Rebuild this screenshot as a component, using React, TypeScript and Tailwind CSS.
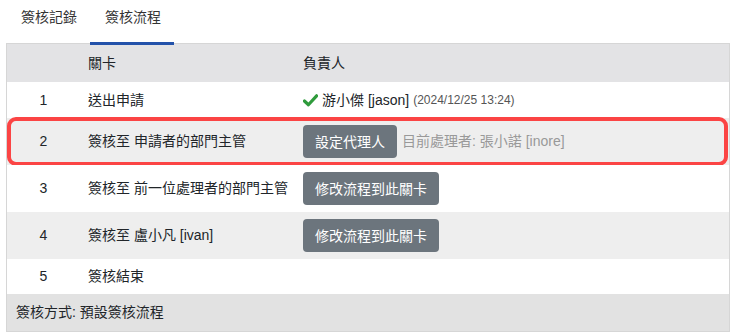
import React from "react";

const font = { fontFamily: '"Liberation Sans", "Noto Sans CJK TC", sans-serif' };

type Row = {
  no: number;
  step: string;
  shade?: boolean;
  h: string;
  owner?: React.ReactNode;
};

function CheckMark() {
  return (
    <svg viewBox="0 0 16 16" className="w-[15px] h-[15px] mr-[4px]">
      <path d="M1.5 8.5 L5.8 12.5 L14.5 3" fill="none" stroke="#2f9b3c" strokeWidth="3.4" strokeLinecap="round" strokeLinejoin="round" />
    </svg>
  );
}

function GrayButton({ label }: { label: string }) {
  return (
    <button className="h-[33px] px-[12px] rounded-[4px] bg-[#6c757d] text-white text-[14px] leading-none">
      {label}
    </button>
  );
}

export default function App() {
  const rows: Row[] = [
    {
      no: 1,
      step: "送出申請",
      h: "h-[36px]",
      owner: (
        <div className="flex items-center">
          <CheckMark />
          <span className="text-[14px] text-[#212529]">游小傑 [jason]</span>
          <span className="ml-[4px] text-[12px] text-[#555]">(2024/12/25 13:24)</span>
        </div>
      ),
    },
    {
      no: 2,
      step: "簽核至 申請者的部門主管",
      shade: true,
      h: "h-[47px]",
      owner: (
        <div className="flex items-center">
          <GrayButton label="設定代理人" />
          <span className="ml-[5px] text-[14px] text-[#999]">目前處理者: 張小諾 [inore]</span>
        </div>
      ),
    },
    { no: 3, step: "簽核至 前一位處理者的部門主管", h: "h-[47px]", owner: <GrayButton label="修改流程到此關卡" /> },
    { no: 4, step: "簽核至 盧小凡 [ivan]", shade: true, h: "h-[47px]", owner: <GrayButton label="修改流程到此關卡" /> },
    { no: 5, step: "簽核結束", h: "h-[35px]" },
  ];

  return (
    <div className="w-[735px] h-[336px] bg-white px-[6px] text-[#212529]" style={font}>
      {/* Tabs */}
      <div className="flex h-[43px] text-[14px]">
        <div className="w-[84px] px-[15px] pt-[7px] text-[#333] whitespace-nowrap">簽核記錄</div>
        <div className="relative w-[84px] px-[15px] pt-[7px] text-[#333] whitespace-nowrap">
          簽核流程
          <span className="absolute left-0 right-0 bottom-[-2px] h-[3px] bg-[#2352aa] z-10" />
        </div>
      </div>

      {/* Table */}
      <div className="w-[724px] border border-[#d6d6d6] text-[14px]">
        <div className="flex items-center h-[38px] bg-[#e3e3e5]">
          <div className="w-[73px]" />
          <div className="w-[215px] pl-[8px]">關卡</div>
          <div className="pl-[8px]">負責人</div>
        </div>
        {rows.map((r) => (
          <div key={r.no} className={`relative flex items-center ${r.h} ${r.shade ? "bg-[#eeeeee]" : "bg-white"}`}>
            <div className="w-[73px] text-center">{r.no}</div>
            <div className="w-[215px] pl-[8px] whitespace-nowrap">{r.step}</div>
            <div className="pl-[8px]">{r.owner}</div>
            {r.no === 2 && (
              <span className="absolute left-0 right-[1px] top-[-1px] bottom-[-1px] border-4 border-[#fb4444] rounded-[9px] pointer-events-none" />
            )}
          </div>
        ))}
        <div className="flex items-center h-[37px] bg-[#e2e2e2] pl-[9px]">簽核方式: 預設簽核流程</div>
      </div>
    </div>
  );
}
